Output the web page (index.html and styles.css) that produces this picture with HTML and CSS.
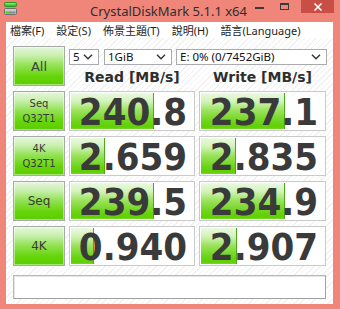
FILE: index.html
```html
<!DOCTYPE html>
<html>
<head>
<meta charset="utf-8">
<link rel="stylesheet" href="styles.css">
</head>
<body>
<div class="window">
  <div class="titlebar">
    <div class="appicon">
      <svg width="14" height="14" viewBox="0 0 14 14">
        <rect x="0.5" y="0.5" width="12" height="4" rx="1" fill="#3fbf2a" stroke="#2a9a1c"/>
        <rect x="1.5" y="1.2" width="10" height="1.2" fill="#9fe88f"/>
        <rect x="0.5" y="6.5" width="12" height="6" rx="1" fill="#c9c9c9" stroke="#6f6f6f"/>
        <rect x="1.5" y="9.5" width="10" height="2" fill="#8a8a8a"/>
        <rect x="2" y="10" width="3" height="1.2" fill="#4ed23a"/>
      </svg>
    </div>
    <div class="title">CrystalDiskMark 5.1.1 x64</div>
    <div class="caption">
      <div class="cbtn min"><span></span></div>
      <div class="cbtn max"><span></span></div>
      <div class="cbtn close">
        <svg width="10" height="8" viewBox="0 0 10 8"><path d="M1.5 0.5 L8.5 7.5 M8.5 0.5 L1.5 7.5" stroke="#fff" stroke-width="1.6"/></svg>
      </div>
    </div>
  </div>
  <div class="frame">
    <div class="menubar">
      <span class="m1">檔案(F)</span>
      <span class="m2">設定(S)</span>
      <span class="m3">佈景主題(T)</span>
      <span class="m4">說明(H)</span>
      <span class="m5">語言(Language)</span>
    </div>
    <div class="content">
      <div class="grid">
        <div class="btn all">All</div>
        <div class="controls">
          <div class="selects">
            <div class="select s-count">5<svg class="chev" width="10" height="6" viewBox="0 0 10 6"><path d="M1 0.8 L5 4.8 L9 0.8" fill="none" stroke="#333" stroke-width="1.4"/></svg></div>
            <div class="select s-size">1GiB<svg class="chev" width="10" height="6" viewBox="0 0 10 6"><path d="M1 0.8 L5 4.8 L9 0.8" fill="none" stroke="#333" stroke-width="1.4"/></svg></div>
            <div class="select s-drive">E: 0% (0/7452GiB)<svg class="chev" width="10" height="6" viewBox="0 0 10 6"><path d="M1 0.8 L5 4.8 L9 0.8" fill="none" stroke="#333" stroke-width="1.4"/></svg></div>
          </div>
          <div class="heads">
            <div class="head">Read [MB/s]</div>
            <div class="head">Write [MB/s]</div>
          </div>
        </div>

        <div class="btn label">Seq<br>Q32T1</div>
        <div class="val" style="--w:84px"><span class="num">240.8</span></div>
        <div class="val" style="--w:85px"><span class="num">237.1</span></div>

        <div class="btn label">4K<br>Q32T1</div>
        <div class="val" style="--w:35px"><span class="num">2.659</span></div>
        <div class="val" style="--w:36px"><span class="num">2.835</span></div>

        <div class="btn label big">Seq</div>
        <div class="val" style="--w:84px"><span class="num">239.5</span></div>
        <div class="val" style="--w:85px"><span class="num">234.9</span></div>

        <div class="btn label big">4K</div>
        <div class="val" style="--w:24px"><span class="num">0.940</span></div>
        <div class="val" style="--w:37px"><span class="num">2.907</span></div>
      </div>
      <div class="status"></div>
    </div>
  </div>
</div>
</body>
</html>
```

FILE: styles.css
```css
* { box-sizing: border-box; }

body {
  margin: 0;
  width: 340px;
  height: 309px;
  overflow: hidden;
  background: #f0857a;
}

.window {
  width: 340px;
  height: 309px;
  display: flex;
  flex-direction: column;
  background: #f0857a;
}

.titlebar {
  height: 22px;
  display: grid;
  grid-template-columns: 1fr auto 1fr;
  align-items: start;
}

.appicon {
  padding: 2px 0 0 4px;
  height: 16px;
}

.title {
  font: 13px "Noto Sans", "Open Sans", sans-serif;
  color: #2e2e2e;
  line-height: 20px;
  padding-top: 1px;
  white-space: nowrap;
}

.caption {
  display: flex;
  justify-content: flex-end;
  padding-right: 6px;
}

.cbtn {
  height: 13px;
  display: flex;
  align-items: center;
  justify-content: center;
}

.cbtn.min {
  width: 25px;
}

.cbtn.min span {
  width: 9px;
  height: 2px;
  background: #3a3a3a;
  margin-top: 3px;
}

.cbtn.max {
  width: 25px;
}

.cbtn.max span {
  width: 9px;
  height: 7px;
  border: 1px solid #3a3a3a;
  border-top-width: 2px;
  margin-top: -1px;
}

.cbtn.close {
  width: 33px;
  background: #c94f46;
  margin-left: 4px;
}

.frame {
  flex: 1;
  display: flex;
  flex-direction: column;
  padding: 0 7px 5px 6px;
}

.menubar {
  height: 16px;
  background: #fff;
  display: flex;
  align-items: center;
  padding-left: 4px;
  font: 11px "Noto Sans", "Noto Sans CJK TC", sans-serif;
  color: #1e1e1e;
  white-space: nowrap;
}

.menubar span { margin-right: 12px; }

.content {
  flex: 1;
  background: repeating-linear-gradient(135deg, #ffffff 0 3px, #f1f1f1 3px 4px);
  padding: 8px 7px 5px 7px;
  display: flex;
  flex-direction: column;
}

.grid {
  display: grid;
  grid-template-columns: 52px 126px 127px;
  grid-template-rows: repeat(5, 40px);
  column-gap: 4px;
  row-gap: 5px;
}

.btn {
  border: 1px solid #a7a9a7;
  box-shadow: inset 0 0 0 1px rgba(255,255,255,0.45);
  background: linear-gradient(#e6f6df 0%, #c9f0b0 22%, #93e255 48%, #66d40a 78%, #5ccd00 100%);
  display: flex;
  align-items: center;
  justify-content: center;
  text-align: center;
  color: #3a3a3a;
  font-family: "DejaVu Sans", sans-serif;
}

.btn.all {
  font-size: 13px;
  color: #404040;
}

.btn.label {
  font-size: 10px;
  line-height: 15px;
}

.btn.big {
  font-size: 12px;
}

.controls {
  grid-column: 2 / 4;
  display: flex;
  flex-direction: column;
}

.selects {
  display: flex;
  margin-top: 3px;
  height: 16px;
}

.select {
  height: 16px;
  border: 1px solid #a9abb0;
  background: #fff;
  font: 11.5px "Noto Sans", sans-serif;
  color: #111;
  line-height: 14px;
  padding-left: 3px;
  display: flex;
  align-items: center;
  justify-content: space-between;
  padding-right: 5px;
  white-space: nowrap;
}

.s-count { width: 30px; margin-right: 5px; }
.s-size { width: 68px; margin-right: 4px; }
.s-drive { flex: 1; margin-right: -1px; }

.chev { flex: none; }

.heads {
  display: grid;
  grid-template-columns: 126px 127px;
  column-gap: 4px;
  margin-top: 5px;
}

.head {
  text-align: center;
  font: bold 14px "DejaVu Sans", sans-serif;
  line-height: 14px;
  color: #2e2e2e;
}

.val {
  border: 1px solid #cacaca;
  background:
    linear-gradient(#4aaa1c, #4aaa1c) no-repeat calc(var(--w) - 1px) 0 / 1px 100%,
    linear-gradient(#eefae6 0%, #d2f3b8 25%, #98e258 50%, #6cd418 78%, #5fd000 92%, #7fdc40 100%) no-repeat 0 0 / var(--w) 100%,
    #ffffff;
  box-shadow: inset 0 0 0 1px #ffffff;
  text-align: right;
  padding-right: 7px;
  display: flex;
  align-items: center;
  justify-content: flex-end;
}

.num {
  font-family: "DejaVu Sans Condensed", "DejaVu Sans", sans-serif;
  font-stretch: condensed;
  font-weight: bold;
  font-size: 38px;
  line-height: 1.1;
  display: block;
  margin-top: 3px;
  color: #3a3a3a;
}

.status {
  margin-top: 9px;
  height: 24px;
  border: 1px solid #b9b9b9;
  border-right-color: #a0a0a0;
  border-bottom-color: #a0a0a0;
  background: #fff;
  box-shadow: inset 1px 1px 0 #e6e6e6;
}
```
